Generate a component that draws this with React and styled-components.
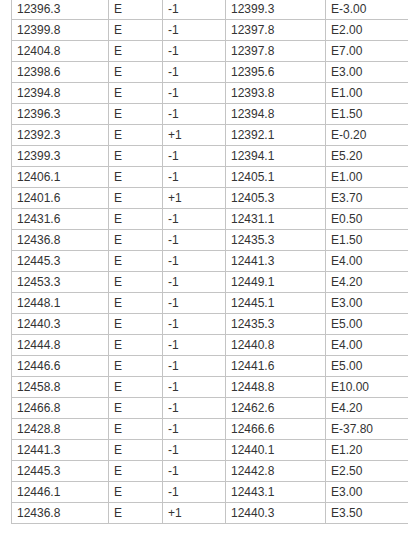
import React from "react";
import styled, { createGlobalStyle } from "styled-components";

const Global = createGlobalStyle`
  html, body { margin: 0; padding: 0; background: #ffffff; }
  body { font-family: "Liberation Sans", Arial, sans-serif; overflow: hidden; }
`;

const Frame = styled.div`
  width: 408px;
  height: 560px;
  overflow: hidden;
  padding-left: 11px;
  box-sizing: border-box;
`;

const Table = styled.table`
  border-collapse: collapse;
  table-layout: fixed;
  width: 414px;
  margin-top: -2px;
  font-size: 12px;
  color: #333333;
`;

const Cell = styled.td`
  border: 1px solid #c4c4c4;
  height: 21px;
  padding: 0 5px;
  box-sizing: border-box;
  vertical-align: middle;
  white-space: nowrap;
  line-height: 14px;
`;

const widths = [97, 54, 63, 100, 100];

const rows = [
  ["12396.3", "E", "-1", "12399.3", "E-3.00"],
  ["12399.8", "E", "-1", "12397.8", "E2.00"],
  ["12404.8", "E", "-1", "12397.8", "E7.00"],
  ["12398.6", "E", "-1", "12395.6", "E3.00"],
  ["12394.8", "E", "-1", "12393.8", "E1.00"],
  ["12396.3", "E", "-1", "12394.8", "E1.50"],
  ["12392.3", "E", "+1", "12392.1", "E-0.20"],
  ["12399.3", "E", "-1", "12394.1", "E5.20"],
  ["12406.1", "E", "-1", "12405.1", "E1.00"],
  ["12401.6", "E", "+1", "12405.3", "E3.70"],
  ["12431.6", "E", "-1", "12431.1", "E0.50"],
  ["12436.8", "E", "-1", "12435.3", "E1.50"],
  ["12445.3", "E", "-1", "12441.3", "E4.00"],
  ["12453.3", "E", "-1", "12449.1", "E4.20"],
  ["12448.1", "E", "-1", "12445.1", "E3.00"],
  ["12440.3", "E", "-1", "12435.3", "E5.00"],
  ["12444.8", "E", "-1", "12440.8", "E4.00"],
  ["12446.6", "E", "-1", "12441.6", "E5.00"],
  ["12458.8", "E", "-1", "12448.8", "E10.00"],
  ["12466.8", "E", "-1", "12462.6", "E4.20"],
  ["12428.8", "E", "-1", "12466.6", "E-37.80"],
  ["12441.3", "E", "-1", "12440.1", "E1.20"],
  ["12445.3", "E", "-1", "12442.8", "E2.50"],
  ["12446.1", "E", "-1", "12443.1", "E3.00"],
  ["12436.8", "E", "+1", "12440.3", "E3.50"],
];

export default function App() {
  return (
    <>
      <Global />
      <Frame>
        <Table>
          <colgroup>
            {widths.map((w, i) => (
              <col key={i} style={{ width: w }} />
            ))}
          </colgroup>
          <tbody>
            {rows.map((r, i) => (
              <tr key={i}>
                {r.map((c, j) => (
                  <Cell key={j}>{c}</Cell>
                ))}
              </tr>
            ))}
          </tbody>
        </Table>
      </Frame>
    </>
  );
}
